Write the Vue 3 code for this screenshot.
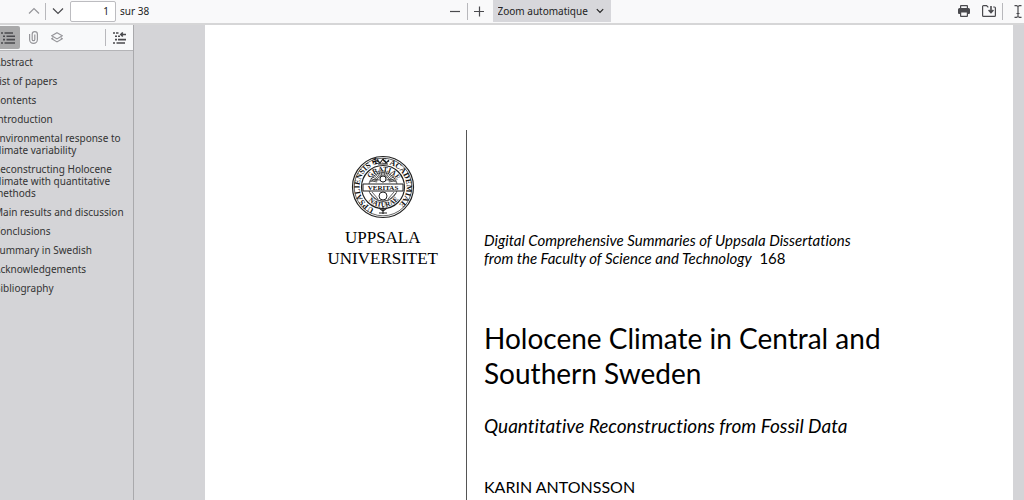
<script setup>
import { ref } from 'vue'

const page = ref('1')
const zoom = ref('auto')
const outline = [
  'Abstract',
  'List of papers',
  'Contents',
  'Introduction',
  'Environmental response to climate variability',
  'Reconstructing Holocene climate with quantitative methods',
  'Main results and discussion',
  'Conclusions',
  'Summary in Swedish',
  'Acknowledgements',
  'Bibliography',
]
const rays = Array.from({ length: 17 }, (_, i) => i * 10 - 80)
</script>

<template>
  <div class="viewer">
    <header class="toolbar">
      <div class="group start">
        <button class="icon faded" aria-label="Précédent">
          <svg width="12" height="12" viewBox="0 0 12 12"><path d="M1 8.5 6 3.5l5 5" /></svg>
        </button>
        <span class="sep"></span>
        <button class="icon" aria-label="Suivant">
          <svg width="12" height="12" viewBox="0 0 12 12"><path d="M1 3.5 6 8.5l5-5" /></svg>
        </button>
        <input id="page" v-model="page" class="page-input" type="text" />
        <label for="page">sur 38</label>
      </div>
      <div class="group middle">
        <button class="icon" aria-label="Zoom arrière">
          <svg width="12" height="12" viewBox="0 0 12 12"><path d="M1 6.5h10" /></svg>
        </button>
        <span class="sep"></span>
        <button class="icon" aria-label="Zoom avant">
          <svg width="12" height="12" viewBox="0 0 12 12"><path d="M1 6.5h10M6.5 1.5v10" /></svg>
        </button>
        <div class="select-wrap">
          <select v-model="zoom" aria-label="Zoom">
            <option value="auto">Zoom automatique</option>
          </select>
          <svg class="caret" width="8" height="8" viewBox="0 0 8 8"><path d="m.8 2.2 3.2 3.2 3.2-3.2" /></svg>
        </div>
      </div>
      <div class="group end">
        <button class="icon" aria-label="Imprimer">
          <svg width="12" height="12" viewBox="0 0 12 12">
            <path class="fill" d="M3 0h6a1 1 0 0 1 1 1v2h.5A1.5 1.5 0 0 1 12 4.5V8a1 1 0 0 1-1 1h-1v2a1 1 0 0 1-1 1H3a1 1 0 0 1-1-1V9H1a1 1 0 0 1-1-1V4.500A1.5 1.5 0 0 1 1.500 3H2V1a1 1 0 0 1 1-1Z" />
            <path class="paper" d="M3.200 1.200h5.600V3H3.200zM3.200 7.500h5.600v3.300H3.200z" />
          </svg>
        </button>
        <button class="icon" aria-label="Enregistrer">
          <svg width="14" height="12" viewBox="0 0 14 12">
            <path d="M6.5 2H5.800L4.600.7H1.500a.9.9 0 0 0-.9.9v8.800c0 .5.4.9.9.9h11c.5 0 .9-.4.9-.9V2.900a.9.9 0 0 0-.9-.9h-1.300" />
            <path class="bold" d="M9 1v6M6.600 5 9 7.500 11.400 5" />
          </svg>
        </button>
        <span class="sep"></span>
        <button class="icon" aria-label="Sélection de texte">
          <svg width="8" height="13" viewBox="0 0 8 13"><path d="M.5.6h2L4 1.600 5.500.6h2M.5 12.400h2L4 11.400l1.500 1h2M4 1.600v9.800M2.500 8.500h3" /></svg>
        </button>
      </div>
    </header>

    <div class="body">
      <aside class="sidebar">
        <div class="side-tools">
          <button class="tab active" aria-label="Plan du document">
            <svg width="14" height="12" viewBox="0 0 14 12">
              <path class="bold" d="M0 1h2M3.500 1H12M2 4.300h2M5.500 4.300H14M2 7.600h2M5.500 7.600H14M0 11h2M3.500 11H14" />
            </svg>
          </button>
          <button class="tab faded" aria-label="Pièces jointes">
            <svg width="9" height="13" viewBox="0 0 9 13">
              <path d="M.6 3v5.500a3.900 3.900 0 0 0 7.800 0V3.200a2.600 2.600 0 0 0-5.200 0v5.200a1.300 1.300 0 0 0 2.600 0V3.500" />
            </svg>
          </button>
          <button class="tab faded" aria-label="Calques">
            <svg width="12" height="11" viewBox="0 0 12 11">
              <path d="M6 .7 11.300 3.800 6 6.900.7 3.800ZM2.200 5.800.7 6.700 6 9.900l5.300-3.200-1.500-.9" />
            </svg>
          </button>
          <span class="sep"></span>
          <button class="tab current" aria-label="Élément actuel">
            <svg width="13" height="12" viewBox="0 0 13 12">
              <path class="bold" d="M0 1h2M3 1h2.500M2 4.300h2M5 4.300h2M2 7.600h2M5 7.600h8M0 11h2M3.500 11H12M8 2.500h5M9.800.5l-2 2 2 2" />
            </svg>
          </button>
        </div>
        <nav class="outline">
          <a v-for="item in outline" :key="item" href="#">{{ item }}</a>
        </nav>
      </aside>

      <main class="canvas">
        <article class="sheet">
          <div class="brand">
            <div class="logo">
              <svg class="seal" width="64" height="64" viewBox="0 0 64 64" role="img" aria-label="Uppsala universitet">
                <defs>
                  <path id="ring-outer" d="M32 55.500a23.500 23.500 0 1 1 .1 0" />
                  <path id="ring-upper" d="M16.500 32a15.500 15.500 0 0 1 31 0" />
                  <path id="ring-lower" d="M12 32a20 20 0 0 0 40 0" />
                </defs>
                <circle cx="32" cy="32" r="30.500" class="rim" />
                <circle cx="32" cy="32" r="28.800" class="thin" />
                <circle cx="32" cy="32" r="21.500" class="rim" />
                <circle cx="32" cy="32" r="14.500" class="thin" />
                <text class="ring-text"><textPath href="#ring-outer" startOffset="9">UPSALIENSIS ✠ S·ACADEMIAE</textPath></text>
                <text class="inner-text"><textPath href="#ring-upper" startOffset="9">GRATIAE</textPath></text>
                <text class="inner-text"><textPath href="#ring-lower" startOffset="15">NATURAE</textPath></text>
                <path class="rim" d="M26 5l3 3 3-4 3 4 3-3M27 9h10M32 51v8M28 53l4 3 4-3M28 58h8" />
                <g class="thin">
                  <path v-for="a in rays" :key="a" d="M32 22V15" :transform="`rotate(${a} 32 28)`" />
                  <path d="M19 27q6-5 13 0q7-5 13 0M19 38q6 8 13 8q7 0 13-8M21 37l6 7M43 37l-6 7" />
                </g>
                <circle cx="32" cy="24" r="3" class="disc" />
                <circle cx="32" cy="41" r="4" class="disc" />
                <path class="disc" d="M12 29h40v7H12z" />
                <text class="motto" x="32" y="35" text-anchor="middle">VERITAS</text>
              </svg>
              <span>UPPSALA</span>
              <span>UNIVERSITET</span>
            </div>
          </div>
          <div class="text">
            <p class="series">
              <em>Digital Comprehensive Summaries of Uppsala Dissertations<br />from the Faculty of Science and Technology</em>&nbsp; 168
            </p>
            <h1>Holocene Climate in Central and<br />Southern Sweden</h1>
            <h2>Quantitative Reconstructions from Fossil Data</h2>
            <p class="author">KARIN ANTONSSON</p>
          </div>
        </article>
      </main>
    </div>
  </div>
</template>

<style>
body {
  overflow: hidden;
}
</style>

<style scoped>
.viewer {
  height: 100vh;
  display: flex;
  flex-direction: column;
  overflow: hidden;
  background: #d4d4d7;
  font: 10px/12px "Noto Sans", sans-serif;
  color: #222;
}
button {
  border: 0;
  padding: 0;
  background: none;
  color: #4a4a4e;
  display: flex;
  align-items: center;
  justify-content: center;
}
svg {
  display: block;
  fill: none;
  stroke: currentColor;
  stroke-width: 1.2;
}
.bold {
  stroke-width: 1.6;
}
.fill {
  fill: currentColor;
  stroke: none;
}
.paper {
  fill: #f9f9fa;
  stroke: none;
}
.faded {
  color: #96969a;
}
.sep {
  width: 1px;
  height: 17px;
  background: #b8b8bc;
}
.toolbar {
  flex: none;
  display: grid;
  grid-template-columns: 1fr auto 1fr;
  height: 23px;
  background: #f9f9fa;
  border-bottom: 2px solid #d6d6d7;
}
.group {
  display: flex;
  align-items: center;
  height: 22px;
}
.start {
  padding-left: 22px;
}
.start .icon,
.middle .icon {
  width: 23px;
  height: 22px;
}
.page-input {
  box-sizing: border-box;
  width: 46px;
  height: 21px;
  margin: 0 4px 0 1px;
  padding: 0 6px;
  border: 1px solid #bcbcc0;
  border-radius: 2px;
  background: #fff;
  color: #222;
  font: 10px "Noto Sans", sans-serif;
  text-align: right;
}
.middle {
  margin-left: 30px;
}
.select-wrap {
  position: relative;
  margin-left: 2px;
}
select {
  appearance: none;
  display: block;
  width: 118px;
  height: 22px;
  padding: 0 20px 0 5px;
  border: 0;
  border-radius: 0;
  background: #d7d7db;
  color: #222;
  font: 10px "Noto Sans", sans-serif;
}
.caret {
  position: absolute;
  right: 7px;
  top: 7px;
  pointer-events: none;
}
.end {
  justify-content: flex-end;
  gap: 12px;
  padding-right: 2px;
}
.end .sep {
  margin: 0 -1px 0 -6px;
}
.body {
  flex: 1;
  min-height: 0;
  display: flex;
}
.sidebar {
  flex: none;
  box-sizing: border-box;
  width: 134px;
  border-right: 1px solid #a9a9ac;
}
.side-tools {
  display: flex;
  align-items: center;
  height: 25px;
  background: #f8f9fa;
  border-bottom: 1px solid #b4b4b7;
}
.tab {
  width: 24px;
  height: 23px;
}
.tab.active {
  width: 20px;
  padding-right: 4px;
  margin-right: 1px;
  background: #a9a9aa;
  border-radius: 0 2px 2px 0;
}
.side-tools .sep {
  margin-left: auto;
}
.tab.current {
  width: 27px;
}
.outline {
  display: flex;
  flex-direction: column;
  gap: 7px;
  margin-left: -6px;
  padding: 5px 4px 0 0;
}
.outline a {
  color: #333;
  text-decoration: none;
}
.canvas {
  flex: 1;
  display: flex;
  padding: 0 11px 0 71px;
}
.sheet {
  flex: 1;
  display: flex;
  padding-top: 105px;
  background: #fff;
  color: #000;
  font-family: Lato, sans-serif;
  font-variant-ligatures: none;
}
.brand {
  flex: none;
  width: 261px;
  box-sizing: border-box;
  padding: 25px 28px 0 0;
  display: flex;
  justify-content: flex-end;
}
.logo {
  display: flex;
  flex-direction: column;
  align-items: center;
  font: 17px/21px "Liberation Serif", serif;
}
.seal {
  margin-bottom: 8px;
  color: #222;
}
.rim {
  stroke-width: 1.2;
}
.thin {
  stroke-width: 0.7;
}
.disc {
  fill: #fff;
  stroke-width: 1;
}
.seal text {
  fill: #111;
  stroke: none;
  font-family: "Liberation Serif", serif;
  font-weight: bold;
}
.ring-text {
  font-size: 8px;
}
.inner-text {
  font-size: 7px;
}
.seal .motto {
  font-size: 7px;
}
.text {
  flex: 1;
  border-left: 1px solid #555;
  padding: 101px 0 0 17px;
}
p,
h1,
h2 {
  margin: 0;
  font-weight: 400;
  white-space: nowrap;
}
.series {
  font-size: 15px;
  line-height: 18px;
}
h1 {
  margin-top: 54px;
  font-size: 28px;
  line-height: 35px;
}
h2 {
  margin-top: 22px;
  font-size: 19px;
  line-height: 26px;
  font-style: italic;
}
.author {
  margin-top: 37px;
  font-size: 16px;
  line-height: 22px;
}
</style>
